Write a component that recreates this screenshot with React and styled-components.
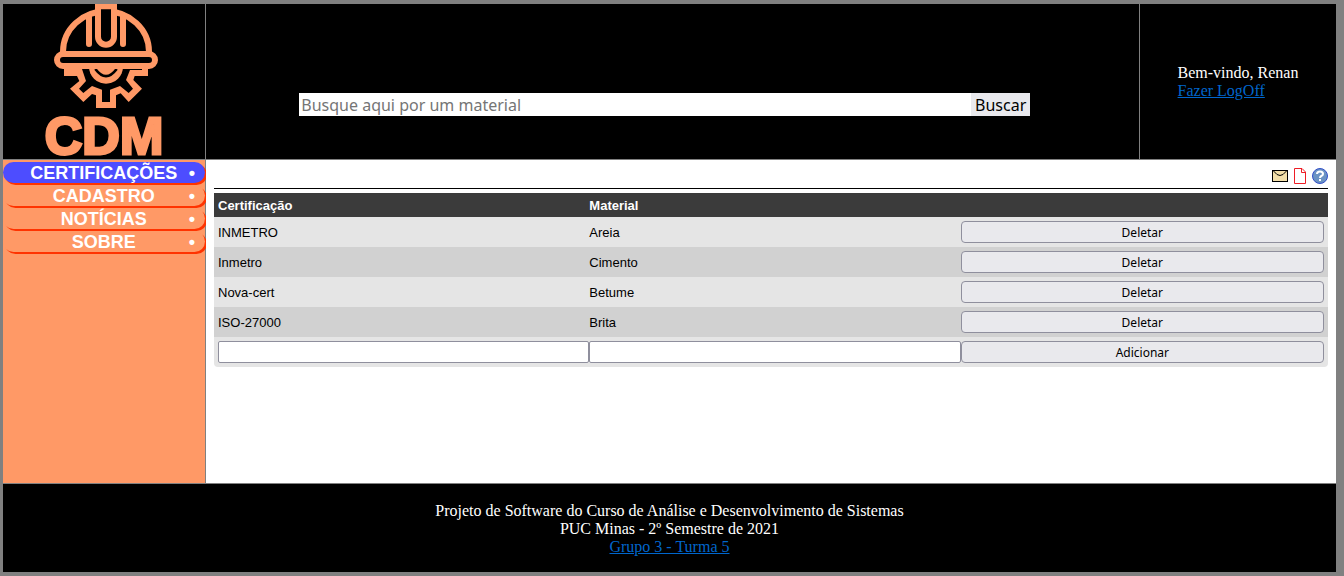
import React from "react";
import styled, { createGlobalStyle } from "styled-components";

const ORANGE = "#ff9966";
const SANS = '"Liberation Sans", Arial, sans-serif';
const UI = '"Noto Sans", "Open Sans", sans-serif';

const GlobalStyle = createGlobalStyle`
  *, *::before, *::after { box-sizing: border-box; }
  body {
    margin: 0;
    background: #808080;
    color: #000;
    font: 16px/18px "Liberation Serif", "Times New Roman", serif;
  }
`;

const Page = styled.div`
  display: grid;
  grid-template-rows: auto 1fr auto;
  min-height: 100vh;
  padding: 4px 8px 4px 3px;
`;

const Header = styled.header`
  display: grid;
  grid-template-columns: 202px 1fr 196px;
  gap: 1px;
  margin-bottom: 1px;
`;

const HeaderCell = styled.div`
  background: #000;
  color: #fff;
`;

const Brand = styled(HeaderCell)`
  display: flex;
  flex-direction: column;
  align-items: center;
  gap: 4px;
`;

const BrandName = styled.h1`
  margin: 0;
  color: ${ORANGE};
  font: bold 52px/46px ${SANS};
  -webkit-text-stroke: 3px ${ORANGE};
`;

const SearchForm = styled.form`
  display: flex;
  align-items: flex-start;
  padding: 89px 0 0 10%;
  background: #000;
`;

const SearchInput = styled.input`
  width: 80%;
  height: 23px;
  padding: 1px 2px 0;
  border: 0;
  border-radius: 0;
  background: #fff;
  font: 16px/22px ${UI};
  &::placeholder { color: #757575; opacity: 1; }
`;

const SearchButton = styled.button`
  height: 23px;
  padding: 2px 4px 0;
  border: 0;
  background: #e9e9ed;
  color: #000;
  font: 16px/21px ${UI};
`;

const UserCell = styled(HeaderCell)`
  display: flex;
  align-items: center;
  justify-content: center;
`;

const TextLink = styled.a`
  color: #0066cc;
  text-decoration: underline;
`;

const Body = styled.div`
  display: grid;
  grid-template-columns: 202px 1fr;
  gap: 1px;
`;

const Nav = styled.nav`
  padding-top: 2px;
  background: ${ORANGE};
`;

const NavList = styled.ul`
  display: flex;
  flex-direction: column;
  gap: 2px;
  margin: 0;
  padding: 0;
  list-style: none;
`;

const NavLink = styled.a`
  display: flex;
  height: 21px;
  padding: 0 10px 0 16px;
  border-radius: 11px;
  background: ${(p) => (p.$active ? "#4d4dff" : ORANGE)};
  box-shadow: 2px 2px 0 #ff3300;
  color: #fff;
  font: bold 18px/23px ${SANS};
  text-decoration: none;
  text-transform: uppercase;
`;

const NavLabel = styled.span`
  flex: 1;
  text-align: center;
`;

const Main = styled.main`
  padding: 8px;
  background: #fff;
`;

const Tools = styled.div`
  display: flex;
  justify-content: flex-end;
  gap: 6px;
  margin-bottom: 4px;
  padding-bottom: 4px;
  border-bottom: 1px solid #000;
`;

const ToolButton = styled.button`
  display: flex;
  padding: 0;
  border: 0;
  background: none;
`;

const Table = styled.table`
  width: 100%;
  table-layout: fixed;
  border-collapse: separate;
  border-spacing: 0;
  border-radius: 0 0 4px 4px;
  overflow: hidden;
  font: 13px/16px ${SANS};
`;

const HeadCell = styled.th`
  height: 24px;
  padding: 5px 4px 3px;
  background: #3b3b3b;
  color: #fff;
  text-align: left;
`;

const Row = styled.tr`
  background: #e5e5e5;
  &:nth-child(even) { background: #d1d1d1; }
`;

const Cell = styled.td`
  height: 30px;
  padding: 6px 4px 4px;
`;

const ControlCell = styled(Cell)`
  padding: 4px;
`;

const CellInput = styled.input`
  display: block;
  width: calc(100% + 8px);
  height: 22px;
  padding: 1px 2px;
  border: 1px solid #8f8f9d;
  border-radius: 2px;
  background: #fff;
  font: 13px/16px ${UI};
`;

const CellButton = styled.button`
  display: block;
  width: 100%;
  height: 22px;
  padding: 2px 0 0;
  border: 1px solid #8f8f9d;
  border-radius: 4px;
  background: #e9e9ed;
  color: #000;
  font: 12px/18px ${UI};
`;

const Footer = styled.footer`
  margin-top: 1px;
  padding: 18px 0 16px;
  background: #000;
  color: #fff;
  text-align: center;
`;

const LogoArt = styled.svg`
  flex: none;
`;

const Logo = () => (
  <LogoArt width="110" height="105" viewBox="147 12 330 315" aria-hidden="true">
    <g fill="none" stroke={ORANGE} strokeWidth="18">
      <path d="M189 158V155A129 121 0 0 1 447 155V158" />
      <path d="M267 46V132M369 46V132" strokeLinecap="round" />
      <path d="M294 19H342V110A24 24 0 0 1 294 110Z" fill="#000" />
    </g>
    <path fill={ORANGE} d="M192 200V228H231L238 243L210 266L250 306L276 282L288 286V324H348V286L362 280L386 306L426 266L400 240L404 228H444V200Z" />
    <path d="M210 207H246L258 243L237 266L250 279L276 258L306 269V306H330V269L360 258L386 279L399 266L378 240L390 210H426V207Z" />
    <path d="M267 200A51 51 0 0 0 369 200Z" fill={ORANGE} />
    <path d="M286 207Q318 250 350 207" fill="none" stroke="#000" strokeWidth="8" />
    <rect x="171" y="162" width="294" height="36" rx="18" stroke={ORANGE} strokeWidth="18" />
  </LogoArt>
);

const MailIcon = () => (
  <svg width="16" height="16" viewBox="0 0 16 16" aria-hidden="true">
    <rect x="0.5" y="2.5" width="15" height="11" fill="#f3dfa9" stroke="#000" />
    <path d="M1.5 3L5 6.5L8 7.5L11 6.5L14.5 3" fill="none" stroke="#000" />
  </svg>
);

const PageIcon = () => (
  <svg width="12" height="16" viewBox="0 0 12 16" aria-hidden="true">
    <path d="M0.5 0.5H8L11.5 4V15.5H0.5ZM7.5 0.5V4.5H11.5" fill="#fff" stroke="#ee1c25" />
  </svg>
);

const HelpIcon = () => (
  <svg width="16" height="16" viewBox="0 0 16 16" aria-hidden="true">
    <circle cx="8" cy="8" r="7.5" fill="#6b93c4" stroke="#3350c8" />
    <path d="M5 6Q5 3.5 8 3.5T11 6Q11 7.3 9.3 8Q8 8.7 8 10" fill="none" stroke="#fff" strokeWidth="2" />
    <rect x="7" y="11" width="2" height="2" fill="#fff" />
  </svg>
);

const sections = ["Certificações", "Cadastro", "Notícias", "Sobre"];

const certifications = [
  ["INMETRO", "Areia"],
  ["Inmetro", "Cimento"],
  ["Nova-cert", "Betume"],
  ["ISO-27000", "Brita"],
];

export default function App() {
  return (
    <>
      <GlobalStyle />
      <Page>
        <Header>
          <Brand>
            <Logo />
            <BrandName>CDM</BrandName>
          </Brand>
          <SearchForm onSubmit={(e) => e.preventDefault()}>
            <SearchInput type="text" aria-label="Busca" placeholder="Busque aqui por um material" />
            <SearchButton type="submit">Buscar</SearchButton>
          </SearchForm>
          <UserCell>
            <div>
              Bem-vindo, Renan
              <br />
              <TextLink href="#logoff">Fazer LogOff</TextLink>
            </div>
          </UserCell>
        </Header>
        <Body>
          <Nav>
            <NavList>
              {sections.map((name, i) => (
                <li key={name}>
                  <NavLink href={`#${i}`} $active={i === 0}>
                    <NavLabel>{name}</NavLabel>
                    <span>•</span>
                  </NavLink>
                </li>
              ))}
            </NavList>
          </Nav>
          <Main>
            <Tools>
              <ToolButton type="button" aria-label="E-mail"><MailIcon /></ToolButton>
              <ToolButton type="button" aria-label="Documento"><PageIcon /></ToolButton>
              <ToolButton type="button" aria-label="Ajuda"><HelpIcon /></ToolButton>
            </Tools>
            <Table>
              <thead>
                <tr>
                  <HeadCell>Certificação</HeadCell>
                  <HeadCell>Material</HeadCell>
                  <HeadCell />
                </tr>
              </thead>
              <tbody>
                {certifications.map(([name, material]) => (
                  <Row key={name}>
                    <Cell>{name}</Cell>
                    <Cell>{material}</Cell>
                    <ControlCell><CellButton type="button">Deletar</CellButton></ControlCell>
                  </Row>
                ))}
                <Row>
                  <ControlCell><CellInput type="text" aria-label="Certificação" /></ControlCell>
                  <ControlCell><CellInput type="text" aria-label="Material" /></ControlCell>
                  <ControlCell><CellButton type="button">Adicionar</CellButton></ControlCell>
                </Row>
              </tbody>
            </Table>
          </Main>
        </Body>
        <Footer>
          Projeto de Software do Curso de Análise e Desenvolvimento de Sistemas
          <br />
          PUC Minas - 2º Semestre de 2021
          <br />
          <TextLink href="#grupo">Grupo 3 - Turma 5</TextLink>
        </Footer>
      </Page>
    </>
  );
}
